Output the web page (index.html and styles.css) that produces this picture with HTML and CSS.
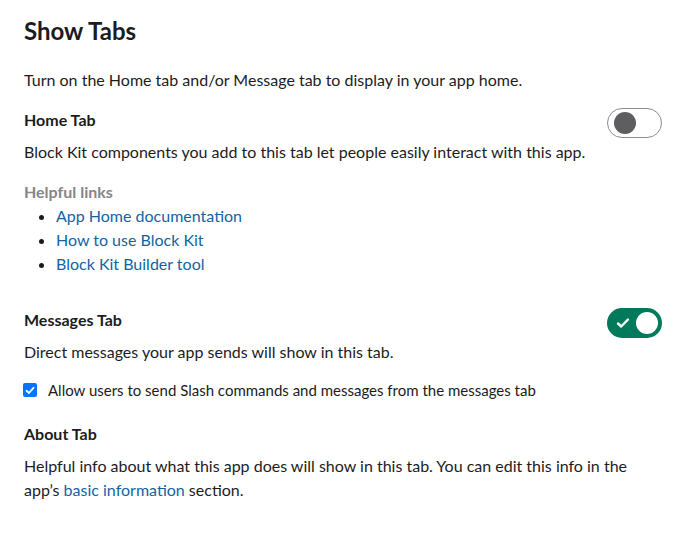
FILE: index.html
```html
<!DOCTYPE html>
<html>
<head>
<meta charset="utf-8">
<link rel="stylesheet" href="styles.css">
</head>
<body>
<div class="page">
  <h1 class="title">Show Tabs</h1>
  <p class="intro">Turn on the Home tab and/or Message tab to display in your app home.</p>

  <section class="tab home">
    <div class="tab-head">
      <h2 class="tab-title">Home Tab</h2>
      <span class="toggle off" role="switch" aria-checked="false"><span class="knob"></span></span>
    </div>
    <p class="desc">Block Kit components you add to this tab let people easily interact with this app.</p>
    <div class="links">
      <div class="links-title">Helpful links</div>
      <ul class="link-list">
        <li><a href="#">App Home documentation</a></li>
        <li><a href="#">How to use Block Kit</a></li>
        <li><a href="#">Block Kit Builder tool</a></li>
      </ul>
    </div>
  </section>

  <section class="tab messages">
    <div class="tab-head">
      <h2 class="tab-title">Messages Tab</h2>
      <span class="toggle on" role="switch" aria-checked="true">
        <svg class="check" width="14" height="12" viewBox="0 0 14 12"><path d="M2 6.5 L5.2 9.5 L12 2.5" fill="none" stroke="#fff" stroke-width="2.4" stroke-linecap="round" stroke-linejoin="round"/></svg>
        <span class="knob"></span>
      </span>
    </div>
    <p class="desc">Direct messages your app sends will show in this tab.</p>
    <label class="check-row"><span class="box"><svg width="10" height="9" viewBox="0 0 10 9"><path d="M1.5 4.8 L4 7 L8.5 1.8" fill="none" stroke="#fff" stroke-width="1.8" stroke-linecap="round" stroke-linejoin="round"/></svg></span>Allow users to send Slash commands and messages from the messages tab</label>
  </section>

  <section class="tab about">
    <h2 class="tab-title">About Tab</h2>
    <p class="desc">Helpful info about what this app does will show in this tab. You can edit this info in the app’s <a href="#">basic information</a> section.</p>
  </section>
</div>
</body>
</html>
```
FILE: styles.css
```css
* { box-sizing: border-box; }
html, body { margin: 0; padding: 0; background: #fff; }
body {
  font-family: Lato, "Open Sans", sans-serif;
  font-size: 16px;
  line-height: 24px;
  color: #1d1c1d;
}
.page {
  width: 686px;
  padding: 14px 24px 24px 24px;
}
.title {
  font-size: 24px;
  font-weight: 700;
  line-height: 34px;
  margin: 0 0 20px 0;
}
.intro { margin: 0 0 12px 0; }
.tab-head {
  display: flex;
  justify-content: space-between;
  align-items: center;
  height: 32px;
}
.tab-title {
  font-size: 16px;
  font-weight: 700;
  line-height: 24px;
  margin: 0;
}
.desc { margin: 4px 0 0 0; }
a { color: #1264a3; text-decoration: none; }
.links { margin-top: 16px; }
.links-title { color: #868686; font-weight: 700; }
.link-list {
  margin: 0;
  padding-left: 32px;
}
.link-list li::marker { color: #1d1c1d; }
.messages { margin-top: 28px; }
.about { margin-top: 20px; }
.about .desc { margin-top: 8px; }

.toggle {
  width: 55px;
  height: 30px;
  border-radius: 15px;
  display: flex;
  align-items: center;
  flex-shrink: 0;
  margin-top: 5px;
}
.toggle.off {
  border: 1px solid #8d8d8d;
  background: #fff;
  padding-left: 6px;
}
.toggle.off .knob {
  width: 22px; height: 22px; border-radius: 50%;
  background: #5e5d60;
}
.toggle.on {
  background: #007a5a;
  padding: 0 4px 0 9px;
  justify-content: space-between;
}
.toggle.on .knob {
  width: 22px; height: 22px; border-radius: 50%;
  background: #fff;
}
.check { display: block; }

.check-row {
  display: flex;
  align-items: center;
  margin-top: 14px;
  margin-left: -1px;
  font-size: 15px;
}
.box {
  width: 14px; height: 14px;
  border-radius: 2px;
  background: #0075ff;
  display: flex;
  align-items: center;
  justify-content: center;
  margin-right: 11px;
}
.box svg { display: block; }
```
